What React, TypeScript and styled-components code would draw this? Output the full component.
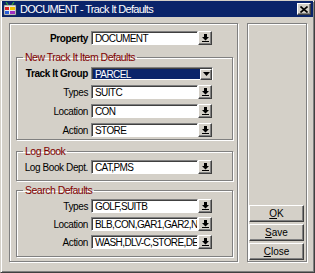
import React from "react";
import styled, { createGlobalStyle } from "styled-components";

const GlobalStyle = createGlobalStyle`
  html, body {
    margin: 0;
    padding: 0;
    background: #d4d0c8;
  }
  body {
    font-family: "Liberation Sans", Arial, sans-serif;
    font-size: 10px;
    letter-spacing: -0.4px;
    color: #000;
  }
`;

const Window = styled.div`
  width: 315px;
  height: 273px;
  box-sizing: border-box;
  background: #d4d0c8;
  border: 1px solid;
  border-color: #d4d0c8 #404040 #404040 #d4d0c8;
  box-shadow: inset 1px 1px #fff, inset -1px -1px #808080;
  padding: 0 1px 2px 1px;
  display: flex;
  flex-direction: column;
`;

const TitleBar = styled.div`
  height: 16px;
  background: #0a246a;
  display: flex;
  align-items: center;
  padding: 0 2px 0 1px;
  gap: 3px;
  color: #fff;
`;

const TitleText = styled.div`
  flex: 1;
  font-size: 11px;
  letter-spacing: -0.7px;
  line-height: 16px;
  white-space: nowrap;
`;

const CloseBox = styled.div`
  width: 12px;
  height: 10px;
  background: #d4d0c8;
  border: 1px solid;
  border-color: #fff #404040 #404040 #fff;
  box-shadow: inset -1px -1px #808080;
  display: flex;
  align-items: center;
  justify-content: center;
`;

const Content = styled.div`
  flex: 1;
  display: flex;
  gap: 9px;
  padding: 6px 6px 8px 7px;
`;

const Etched = styled.div`
  box-sizing: border-box;
  border: 1px solid #808080;
  box-shadow: inset 1px 1px #fff, 1px 1px #fff;
`;

const MainPanel = styled(Etched)`
  width: 229px;
  padding: 7px 4px 0 6px;
  display: flex;
  flex-direction: column;
`;

const SidePanel = styled(Etched)`
  width: 60px;
  padding: 0 1px 1px 1px;
  display: flex;
  flex-direction: column;
  justify-content: flex-end;
  gap: 2px;
`;

const Group = styled.fieldset<{ $gap: number; $top: number; $bottom: number }>`
  margin: ${(p) => p.$top}px 0 0 0;
  min-width: 0;
  padding: 2px 4px ${(p) => p.$bottom}px 4px;
  border: 1px solid #808080;
  box-shadow: inset 1px 1px #fff, 1px 1px #fff;
  display: flex;
  flex-direction: column;
  gap: ${(p) => p.$gap}px;
`;

const Legend = styled.legend`
  color: #800000;
  font-size: 10.5px;
  letter-spacing: -0.5px;
  line-height: 14px;
  padding: 0 2px;
  margin-left: 2px;
`;

const Row = styled.div`
  display: flex;
  align-items: center;
  gap: 3px;
  height: 14px;
`;

const Label = styled.div<{ $w: number; $bold?: boolean }>`
  flex-shrink: 0;
  width: ${(p) => p.$w}px;
  text-align: right;
  white-space: nowrap;
  font-weight: ${(p) => (p.$bold ? "bold" : "normal")};
`;

const Field = styled.div`
  display: flex;
  align-items: center;
`;

const Input = styled.div`
  box-sizing: border-box;
  width: 107px;
  height: 14px;
  background: #fff;
  border: 1px solid;
  border-color: #808080 #fff #fff #808080;
  box-shadow: inset 1px 1px #404040;
  padding: 0 1px 0 3px;
  line-height: 13px;
  letter-spacing: -0.6px;
  white-space: nowrap;
  overflow: hidden;
`;

const SmallBtn = styled.div`
  box-sizing: border-box;
  width: 14px;
  height: 14px;
  background: #d4d0c8;
  border: 1px solid;
  border-color: #fff #404040 #404040 #fff;
  box-shadow: inset -1px -1px #808080;
  display: flex;
  align-items: center;
  justify-content: center;
`;

const Select = styled.div`
  box-sizing: border-box;
  width: 122px;
  height: 13px;
  background: #fff;
  border: 1px solid;
  border-color: #808080 #fff #fff #808080;
  box-shadow: inset 1px 1px #404040;
  display: flex;
  padding: 1px 0 0 1px;
`;

const Selected = styled.div`
  flex: 1;
  background: #0a246a;
  color: #fff;
  line-height: 11px;
  letter-spacing: -0.6px;
  padding-left: 2px;
`;

const ComboBtn = styled(SmallBtn)`
  width: 12px;
  height: 11px;
`;

const Button = styled.div`
  box-sizing: border-box;
  width: 55px;
  height: 17px;
  background: #d4d0c8;
  border: 1px solid;
  border-color: #fff #404040 #404040 #fff;
  box-shadow: inset -1px -1px #808080;
  text-align: center;
  line-height: 15px;
  letter-spacing: 0;
  u {
    text-decoration: underline;
  }
`;

function DropArrow() {
  return (
    <svg width="7" height="8" viewBox="0 0 7 8">
      <path d="M2 0h3v3h2l-3.5 3.5L0 3h2z" fill="#000" />
      <rect x="0" y="7" width="7" height="1" fill="#000" />
    </svg>
  );
}

function ComboArrow() {
  return (
    <svg width="7" height="4" viewBox="0 0 7 4">
      <path d="M0 0h7L3.5 4z" fill="#000" />
    </svg>
  );
}

function AppIcon() {
  return (
    <svg width="14" height="14" viewBox="0 0 14 14">
      <rect x="1" y="3" width="12" height="10" fill="#e8e8e8" stroke="#444" strokeWidth="0.6" />
      <rect x="2" y="5" width="4" height="3" fill="#d22" />
      <rect x="7" y="5" width="5" height="3" fill="#f0c000" />
      <rect x="2" y="9" width="4" height="3" fill="#2a5fd8" />
      <rect x="7" y="9" width="5" height="3" fill="#a030c0" />
      <path d="M3 0l2 3M11 0l-2 3" stroke="#3a3" strokeWidth="1.2" />
    </svg>
  );
}

function DropField({ value }: { value: string }) {
  return (
    <Field>
      <Input>{value}</Input>
      <SmallBtn>
        <DropArrow />
      </SmallBtn>
    </Field>
  );
}

export default function App() {
  return (
    <>
      <GlobalStyle />
      <Window>
        <TitleBar>
          <AppIcon />
          <TitleText>DOCUMENT - Track It Defaults</TitleText>
          <CloseBox>
            <svg width="8" height="7" viewBox="0 0 8 7">
              <path d="M0.5 0.5l7 6M7.5 0.5l-7 6" stroke="#000" strokeWidth="1.6" />
            </svg>
          </CloseBox>
        </TitleBar>
        <Content>
          <MainPanel>
            <Row>
              <Label $w={72} $bold>
                Property
              </Label>
              <DropField value="DOCUMENT" />
            </Row>

            <Group $gap={5} $top={5} $bottom={2}>
              <Legend>New Track It Item Defaults</Legend>
              <Row>
                <Label $w={67} $bold>
                  Track It Group
                </Label>
                <Select>
                  <Selected>PARCEL</Selected>
                  <ComboBtn>
                    <ComboArrow />
                  </ComboBtn>
                </Select>
              </Row>
              <Row>
                <Label $w={67}>Types</Label>
                <DropField value="SUITC" />
              </Row>
              <Row>
                <Label $w={67}>Location</Label>
                <DropField value="CON" />
              </Row>
              <Row>
                <Label $w={67}>Action</Label>
                <DropField value="STORE" />
              </Row>
            </Group>

            <Group $gap={4} $top={4} $bottom={6}>
              <Legend>Log Book</Legend>
              <Row>
                <Label $w={67}>Log Book Dept.</Label>
                <DropField value="CAT,PMS" />
              </Row>
            </Group>

            <Group $gap={4} $top={2} $bottom={7}>
              <Legend>Search Defaults</Legend>
              <Row>
                <Label $w={67}>Types</Label>
                <DropField value="GOLF,SUITB" />
              </Row>
              <Row>
                <Label $w={67}>Location</Label>
                <DropField value="BLB,CON,GAR1,GAR2,NRM" />
              </Row>
              <Row>
                <Label $w={67}>Action</Label>
                <DropField value="WASH,DLV-C,STORE,DEL" />
              </Row>
            </Group>
          </MainPanel>

          <SidePanel>
            <Button>
              <u>O</u>K
            </Button>
            <Button>
              <u>S</u>ave
            </Button>
            <Button>
              <u>C</u>lose
            </Button>
          </SidePanel>
        </Content>
      </Window>
    </>
  );
}
